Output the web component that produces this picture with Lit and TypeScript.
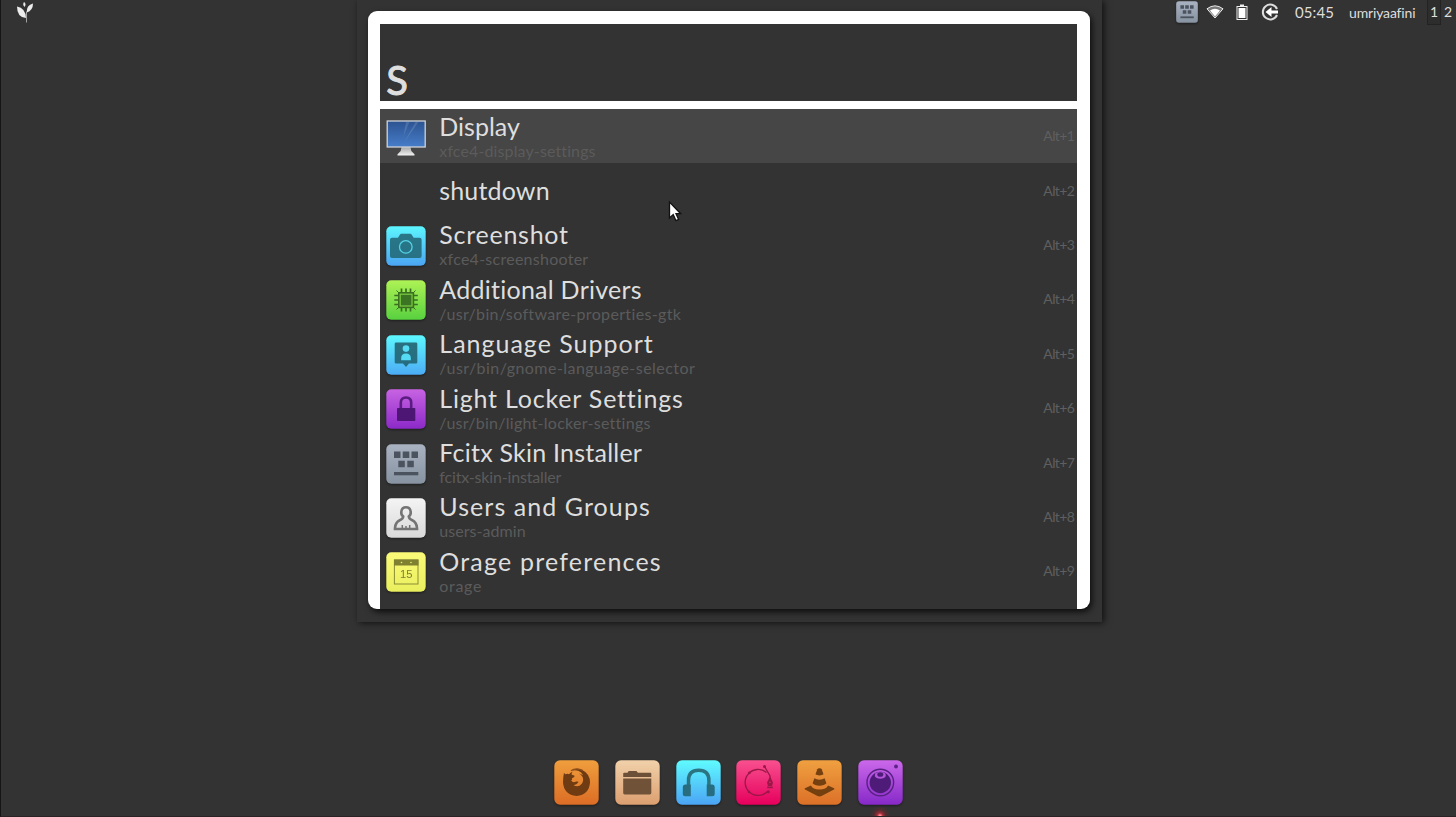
import { LitElement, html, css, svg, TemplateResult } from "lit";
import { customElement, property } from "lit/decorators.js";

type Palette = [string, string];

const tiles: Record<string, Palette> = {
  screenshot: ["#5df6ff", "#4ba5f2"],
  drivers: ["#aef255", "#58d13f"],
  language: ["#5df8ff", "#4cacf5"],
  lock: ["#c763e2", "#8c2ac9"],
  keyboard: ["#a9b2c1", "#8793a1"],
  users: ["#f4f4f4", "#d9d9d9"],
  calendar: ["#fbfb78", "#e9ee5e"],
  firefox: ["#ef9e3d", "#dc6d25"],
  files: ["#f1d1aa", "#dc9f70"],
  music: ["#5ffbff", "#4ba4f5"],
  pen: ["#f8508f", "#e6005c"],
  vlc: ["#efa040", "#dc7028"],
  camera: ["#cb68ea", "#8629c8"],
};

const glyphs: Record<string, TemplateResult> = {
  screenshot: svg`
    <path d="M6 11.800h6l2-3.300q.4-.8 1.300-.8h9q.9 0 1.300.8l2 3.300h6q2 0 2 2v16.300q0 2-2 2h-27.600q-2 0-2-2v-16.300q0-2 2-2z" fill="#236a7a" fill-opacity=".9"/>
    <circle cx="19.800" cy="20.900" r="6.300" fill="none" stroke="#55d3e6" stroke-width="1.300"/>`,
  drivers: svg`
    <g stroke="#3a6e20" fill="none">
      <path d="M15.500 8.500v23M20 8.500v23M24.500 8.500v23M8.300 15.500h23.500M8.300 20h23.500M8.300 24.500h23.500" stroke-width="1.700"/>
      <path d="M10.500 10.500l3 3M29.500 10.500l-3 3M10.500 29.500l3-3M29.500 29.500l-3-3" stroke-width="1"/>
      <rect x="12.800" y="12.800" width="14.600" height="14.600" fill="#7ccd42" stroke-width="1.600"/>
    </g>
    <rect x="14.800" y="14.800" width="10.600" height="10.600" fill="#3b7423"/>`,
  language: svg`
    <path d="M10 7.500h20q1.300 0 1.300 1.300v18.500q0 1.300-1.300 1.300h-7l-3 3.400-3-3.400h-7q-1.300 0-1.300-1.300v-18.500q0-1.300 1.300-1.300z" fill="#246675" fill-opacity=".92"/>
    <circle cx="20" cy="13.600" r="3.300" fill="#55dcf4"/>
    <path d="M15.200 25.300v-2.300q0-4.600 4.800-4.600t4.800 4.600v2.300z" fill="#55dcf4"/>`,
  lock: svg`
    <path d="M14.800 20v-6.300q0-5.200 5.200-5.200t5.200 5.200v6.300" fill="none" stroke="#5a1c80" stroke-width="2.600"/>
    <rect x="11" y="19" width="18.300" height="13" rx=".8" fill="#4d1674"/>`,
  keyboard: svg`
    <g fill="#4b535f">
      <path d="M8 7.500h6.500v6.500h-6.500zM16.700 7.500h6.600v6.500h-6.600zM25.500 7.500h6.500v6.500h-6.500zM12.300 16.800h6.500v6.500h-6.500zM21.300 16.800h6.500v6.500h-6.500z"/>
      <rect x="8" y="28" width="24.300" height="3.300"/>
    </g>`,
  users: svg`
    <path d="M17.200 18.600q-2.300-2-1.900-5 .7-4.300 4.700-4.300t4.700 4.300q.4 3-1.900 5 .3 2.400 3.500 3.700 4.300 2 4.700 7.800v.9h-22v-.9q.4-5.800 4.700-7.800 3.200-1.300 3.500-3.700z" fill="none" stroke="#747474" stroke-width="2.600"/>
    <path d="M16.300 30.500v-3.500M20 30.500v-2.500M23.700 30.500v-3.500" stroke="#747474" stroke-width="1.500"/>`,
  calendar: svg`
    <rect x="8.400" y="8" width="23.600" height="24" fill="none" stroke="#8b8c36" stroke-width="1"/>
    <rect x="8" y="7.500" width="24.500" height="6" fill="#7f8030"/>
    <circle cx="15.500" cy="10.500" r=".8" fill="#eef06a"/><circle cx="25" cy="10.500" r=".8" fill="#eef06a"/>
    <text x="20.200" y="26" text-anchor="middle" font-family="Liberation Sans, sans-serif" font-size="11.200" fill="#7f8030">15</text>`,
  firefox: svg`
    <path d="M10 12.800q.8 1 1.400 1.500 2-1 3.600 0 1.500-2 3.500-2.600-1.200 1.800-.8 3 2.300.3 3 1.300-.4 1.500-2.700 2.300.4 1.600-.8 2.300 1.700 2.800 5 1 2-.4 2.300.5-2 3.300-5 3.200 5 2.600 8.300-1.600 2.400-3.400.5-7.200-1.600-2.400-3.700-3 3 .3 4.600 2-1.700-3.700-5-4.700-3.200-1-6.200-.1 4.400-3.200 9.800-1 8.300 4 8.200 12.900-.9 12.500-13.500 13.400-12.500-.9-13.500-13.400q0-5.500 1-9.800z" fill="#6f3b13"/>
    <path d="M17 10.800q5-3.600 11.500-.4" fill="none" stroke="#91501c" stroke-width="1.300"/>`,
  files: svg`
    <path d="M8.200 17v-3.300q0-.9.900-.9h3.400l1.200-1.900h7.700l1.500 1.900h12.500q.9 0 .9.900v3.300z" fill="#6c5038"/>
    <path d="M8.200 18.600h28.100v14.500q0 1.400-1.400 1.400h-25.300q-1.400 0-1.400-1.400z" fill="#705239"/>`,
  music: svg`
    <path d="M12.500 27v-6.500q0-10.200 10.200-10.200t10.200 10.200v6.500" fill="none" stroke="#2b7582" stroke-width="3.500"/>
    <path d="M14.800 24.500v11.700h-5.500q-2.500 0-2.500-2.500v-6.500q0-2.700 2.700-2.700zM30.700 24.500v11.700h5.500q2.500 0 2.500-2.500v-6.500q0-2.700-2.700-2.700z" fill="#286c80"/>`,
  pen: svg`
    <g fill="none" stroke="#9b1748" stroke-width="1.300">
      <path d="M30.500 12.500A13 13 0 1 0 31.500 31.500"/><path d="M28.500 6.500l5.500 9.500v4"/>
    </g>
    <g fill="#9b1748"><circle cx="28.500" cy="6.500" r="1.500"/><circle cx="13.300" cy="12.900" r="1.300"/><circle cx="13" cy="32" r="1.300"/><circle cx="32.300" cy="31.700" r="1.500"/>
      <path d="M34 16.500l3 6-1 3.500h-4l-1-3.500z"/><rect x="31.200" y="26.500" width="5.600" height="1.700"/></g>
    <circle cx="34" cy="22.300" r=".8" fill="#ee2673"/>`,
  vlc: svg`
    <g fill="#74400f">
      <path d="M20.300 9.300q.4-1 2.200-1t2.200 1l1.800 5q-1 1.100-4 1.100t-4-1.100z"/>
      <path d="M17.400 18.300q2 1.400 5.100 1.400t5.100-1.400l1.800 5q-2 2.400-6.900 2.400t-6.900-2.400z"/>
      <path d="M14 25.500l-6 2.800q-1 .6 0 1.200l12.500 6.500q2 .9 4 0l12.500-6.500q1-.6 0-1.200l-6-2.800q-1.500 3.900-8.500 3.900t-8.500-3.900z"/>
    </g>`,
  camera: svg`
    <circle cx="22.300" cy="22.500" r="13.300" fill="none" stroke="#572081" stroke-width="1.400"/>
    <circle cx="22.300" cy="22.500" r="10.700" fill="#4f1b78"/>
    <path d="M17.300 13.300q-2 5.300 5 5.500 7-.2 5-5.500-2.500-1.600-5-1.500-2.500-.1-5 1.500z" fill="#b455dd"/>
    <ellipse cx="22.300" cy="14.500" rx="3" ry="2.300" fill="#4f1b78"/>
    <circle cx="38" cy="6.500" r="1.900" fill="#5c2288"/>`,
};

@customElement("app-tile")
export class AppTile extends LitElement {
  @property() name = "";
  @property({ type: Number }) box = 40;

  static styles = css`
    :host { display: block; }
    svg { display: block; width: 100%; height: 100%; overflow: visible; }
    .tile { filter: drop-shadow(0 1px 1px rgba(0, 0, 0, 0.45)); }
  `;

  render() {
    if (this.name === "none") return html``;
    if (this.name === "display") {
      return html`<svg viewBox="0 0 40 40">
        <defs>
          <linearGradient id="scr" x1="0" y1="0" x2="0" y2="1"><stop offset="0" stop-color="#2c5391"/><stop offset="1" stop-color="#477dc9"/></linearGradient>
          <linearGradient id="base" x1="0" y1="0" x2="0" y2="1"><stop offset="0" stop-color="#a5a5a5"/><stop offset="1" stop-color="#f2f2f2"/></linearGradient>
        </defs>
        <path d="M15.500 30h9l.8 4 3.200 3.300v1.200h-17v-1.200l3.200-3.300z" fill="url(#base)"/>
        <rect x="1.200" y="4" width="38" height="26" fill="url(#scr)" stroke="#cfd3d8" stroke-width="1.300"/>
        <path d="M20 5l-2.500 14 6-14zM29.500 5l-11 20 14-20z" fill="#fff" fill-opacity=".13"/>
      </svg>`;
    }
    const [from, to] = tiles[this.name];
    const b = this.box;
    return html`<svg class="tile" viewBox="0 0 ${b} ${b}">
      <defs><linearGradient id="bg" x1="0" y1="0" x2="0" y2="1"><stop offset="0" stop-color=${from}/><stop offset="1" stop-color=${to}/></linearGradient></defs>
      <rect x=".3" y=".3" width=${b - 0.6} height=${b - 0.6} rx=${b * 0.125} fill="url(#bg)"/>
      ${glyphs[this.name]}
    </svg>`;
  }
}

interface Entry { icon: string; title: string; command: string; tracking: number; subTracking: number; }

const entries: Entry[] = [
  { icon: "display", title: "Display", command: "xfce4-display-settings", tracking: 0, subTracking: 0.12 },
  { icon: "none", title: "shutdown", command: "", tracking: 0.15, subTracking: 0.3 },
  { icon: "screenshot", title: "Screenshot", command: "xfce4-screenshooter", tracking: 0.74, subTracking: 0.26 },
  { icon: "drivers", title: "Additional Drivers", command: "/usr/bin/software-properties-gtk", tracking: 0.26, subTracking: 0.35 },
  { icon: "language", title: "Language Support", command: "/usr/bin/gnome-language-selector", tracking: 1, subTracking: 0.45 },
  { icon: "lock", title: "Light Locker Settings", command: "/usr/bin/light-locker-settings", tracking: 0.8, subTracking: 0.27 },
  { icon: "keyboard", title: "Fcitx Skin Installer", command: "fcitx-skin-installer", tracking: 0.23, subTracking: -0.16 },
  { icon: "users", title: "Users and Groups", command: "users-admin", tracking: 1.07, subTracking: 0.05 },
  { icon: "calendar", title: "Orage preferences", command: "orage", tracking: 1.2, subTracking: 0.7 },
];

const dock = ["firefox", "files", "music", "pen", "vlc", "camera"];

@customElement("app-root")
export class AppRoot extends LitElement {
  static styles = css`
    :host {
      display: flex; flex-direction: column; position: relative; box-sizing: border-box;
      width: 1456px; height: 817px; overflow: hidden; background: #333;
      border-left: 1px solid #151515; border-bottom: 1px solid #2a2224;
      font-family: Lato, "Liberation Sans", sans-serif; color: #dedede;
    }
    .top { display: grid; grid-template-columns: 356px 745px 1fr; height: 622px; flex: none; }
    .leaf { display: block; margin: 2px 0 0 15px; width: 18px; height: 22px; }
    .window { box-sizing: border-box; padding: 11px 12px 13px 11px; box-shadow: 2px 1px 7px rgba(0,0,0,.7); background: #333; }
    .panel { display: flex; flex-direction: column; box-sizing: border-box; height: 598px; width: 722px; padding: 13px 12.700px 0 12.300px; background: #fff; border-radius: 9px; overflow: hidden; }
    .frame { border-radius: 9px; box-shadow: 2px 3px 6px rgba(0,0,0,.75); height: 598px; width: 722px; }
    .query { height: 77px; flex: none; background: #333; font-size: 40px; line-height: 40px; display: flex; align-items: flex-end; padding: 0 0 1px 6px; box-sizing: border-box; -webkit-text-stroke: 1px #dedede; }
    .list { margin-top: 8px; flex: 1; background: #333; }
    .row { height: 54.400px; display: flex; align-items: center; box-sizing: border-box; padding: 0 3px 0 6px; }
    .row.selected { background: #464646; }
    .icon { width: 40px; height: 40px; flex: none; margin-top: 2px; }
    .labels { flex: 1; margin: 0 0 2px 13px; white-space: nowrap; overflow: hidden; }
    .title { font-size: 25px; line-height: 30px; }
    .command { font-size: 16px; line-height: 19px; color: #5b5b5b; }
    .hint { font-size: 14px; line-height: 20px; color: #5f5f5f; letter-spacing: -.6px; width: 31px; white-space: nowrap; }
    .tray { display: flex; height: 25px; align-items: center; justify-content: flex-end; font-size: 14px; white-space: nowrap; padding-right: 1px; }
    .kb { width: 22px; height: 22px; margin: 0 8px 2px 0; }
    .tray svg { display: block; margin-bottom: 2px; }
    .wifi { width: 18px; height: 14px; margin-right: 12px; }
    .battery { width: 12px; height: 16px; margin-right: 13px; }
    .session { width: 18px; height: 18px; margin-right: 16px; }
    .clock { width: 54px; font-size: 15px; padding-bottom: 1px; letter-spacing: .1px; }
    .user { width: 78px; font-size: 14px; padding-bottom: 1px; letter-spacing: -.15px; }
    .space { width: 14px; height: 25px; line-height: 24px; text-align: center; box-sizing: border-box; }
    .space.on { background: #2d2d2d; border: 1px solid #232323; border-top: 0; }
    .dock { display: flex; gap: 15.750px; padding: 138px 0 0 553px; }
    .dock app-tile { width: 45px; height: 45px; flex: none; }
    .cursor { position: absolute; left: 666px; top: 200px; width: 16px; height: 24px; }
    .glow { position: absolute; left: 868px; top: 805px; width: 22px; height: 22px; background: radial-gradient(circle, #ff8a93 0 6%, rgba(226,40,60,.65) 18%, rgba(200,20,40,.2) 38%, transparent 65%); }
  `;

  render() {
    return html`
      <div class="top">
        <svg class="leaf" viewBox="0 0 18 22" fill="#ececec">
          <path d="M1 4.500q8.500 1.500 9 11.500-9-.5-9-11.500z"/><path d="M10.800 10.500q-.5-7.500 6.200-9 0 7-6.200 9z"/><path d="M8.500 5q-2.300-2.500-.5-5 2.800 2 .5 5z"/><path d="M10 9.500h1v11h-1z" fill-opacity=".6"/>
        </svg>
        <div class="window">
          <div class="frame"><div class="panel">
            <div class="query">S</div>
            <div class="list">
              ${entries.map((e, i) => html`
                <div class="row ${i === 0 ? "selected" : ""}">
                  <app-tile class="icon" name=${e.icon}></app-tile>
                  <div class="labels">
                    <div class="title" style="letter-spacing:${e.tracking}px">${e.title}</div>
                    ${e.command ? html`<div class="command" style="letter-spacing:${e.subTracking}px">${e.command}</div>` : ""}
                  </div>
                  <div class="hint">Alt+${i + 1}</div>
                </div>`)}
            </div>
          </div></div>
        </div>
        <div class="tray">
          <app-tile class="kb" name="keyboard"></app-tile>
          <svg class="wifi" viewBox="0 0 18 14"><path d="M1 3.800q8-6 16 0l-8 9.200z" fill="#777" stroke="#e8e8e8" stroke-width="1"/><path d="M4 5.500q5-3.600 10 0l-5 6z" fill="#fff"/></svg>
          <svg class="battery" viewBox="0 0 12 16"><path d="M4 .500h4v2h-4z" fill="#eee"/><rect x="1" y="2.500" width="10" height="13" fill="none" stroke="#eee"/><rect x="2.500" y="4" width="7" height="10" fill="#fff"/></svg>
          <svg class="session" viewBox="0 0 18 18"><path d="M16 6A7.400 7.400 0 1 0 16 12" fill="none" stroke="#ddd" stroke-width="2"/><path d="M4.500 9l6-5v3.500h6.500v3h-6.500v3.500z" fill="#fff"/></svg>
          <span class="clock">05:45</span>
          <span class="user">umriyaafini</span>
          <span class="space on">1</span><span class="space">2</span>
        </div>
      </div>
      <div class="dock">${dock.map((n) => html`<app-tile name=${n} .box=${45}></app-tile>`)}</div>
      <svg class="cursor" viewBox="0 0 16 24"><path d="M2.500 2v16l3.700-3.400 2.700 6 2.700-1.200-2.600-5.700h4.700z" fill="#fff" stroke="#111" stroke-width="1.300"/></svg>
      <div class="glow"></div>`;
  }
}
